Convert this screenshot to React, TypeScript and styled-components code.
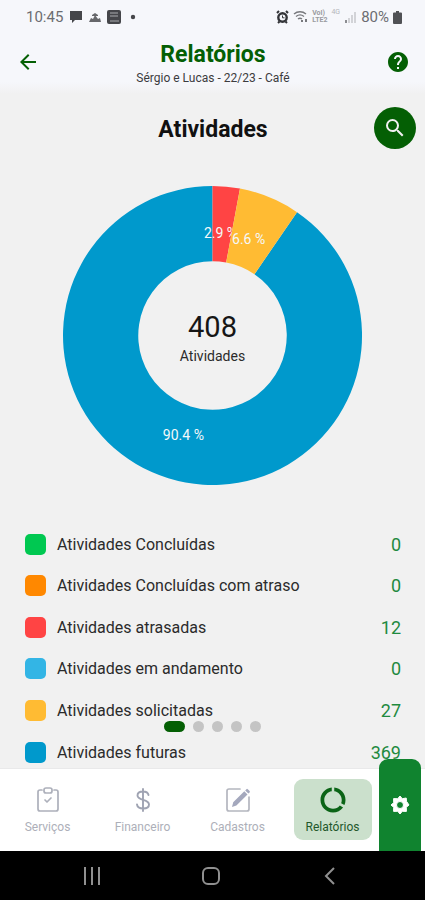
import React from "react";
import styled, { createGlobalStyle, css } from "styled-components";
import { MdArrowBack, MdDataUsage, MdHelp, MdSearch } from "react-icons/md";

const GlobalStyle = createGlobalStyle`
  *, *::before, *::after { box-sizing: border-box; }
  body {
    margin: 0;
    background: #f1f1f1;
    font-family: Roboto, "Liberation Sans", sans-serif;
  }
  button { font: inherit; border: 0; padding: 0; background: none; cursor: pointer; }
`;

const Screen = styled.div`
  display: flex;
  flex-direction: column;
  min-height: 100vh;
`;

const StatusBar = styled.div`
  display: flex;
  align-items: center;
  justify-content: space-between;
  height: 34px;
  padding: 0 23px 0 26px;
  background: #f6f7fb;
  color: #6c6d71;
  font-size: 15px;
`;

const StatusGroup = styled.div<{ $gap: number }>`
  display: flex;
  align-items: center;
  gap: ${(p) => p.$gap}px;
  svg { display: block; }
`;

const NetworkLabel = styled.span`
  display: flex;
  flex-direction: column;
  font-size: 7px;
  font-weight: 700;
  line-height: 7px;
  color: #9a9ba0;
`;

const Generation = styled.span`
  align-self: flex-start;
  font-size: 7px;
  line-height: 8px;
  color: #b5b6ba;
`;

const AppBar = styled.header`
  display: grid;
  grid-template-columns: 40px 1fr 40px;
  align-items: center;
  height: 60px;
  padding: 0 7px 4px 8px;
  background: linear-gradient(#f6f7fb 48px, #f1f1f1);
`;

const BarButton = styled.button`
  display: flex;
  align-items: center;
  justify-content: center;
  height: 40px;
  color: #045f04;
`;

const Titles = styled.div`
  padding-top: 6px;
  text-align: center;
`;

const PageTitle = styled.h1`
  margin: 0;
  font-size: 23px;
  line-height: 26px;
  font-weight: 700;
  color: #045f04;
`;

const Subtitle = styled.p`
  margin: 0;
  font-size: 12px;
  line-height: 20px;
  color: #3c3c3e;
`;

const Content = styled.main`
  position: relative;
  display: flex;
  flex-direction: column;
  flex: 1;
`;

const SectionHead = styled.div`
  display: grid;
  grid-template-columns: 42px 1fr 42px;
  align-items: center;
  padding: 13px 9px 0 10px;
`;

const SectionTitle = styled.h2`
  grid-column: 2;
  margin: 0;
  padding-top: 4px;
  text-align: center;
  font-size: 23px;
  line-height: 28px;
  font-weight: 700;
  color: #111;
`;

const SearchButton = styled.button`
  display: flex;
  align-items: center;
  justify-content: center;
  width: 42px;
  height: 42px;
  border-radius: 50%;
  background: #045f04;
  color: #f1f1f1;
`;

const ChartArea = styled.figure`
  display: flex;
  justify-content: center;
  margin: 0;
  padding: 36px 0 42px 1px;
  svg { display: block; width: 71%; max-width: 360px; height: auto; }
`;

const Legend = styled.ul`
  display: flex;
  flex-direction: column;
  flex: 1;
  justify-content: space-between;
  margin: 0;
  padding: 0 24px 0 25px;
  list-style: none;
`;

const LegendRow = styled.li`
  display: flex;
  align-items: center;
  gap: 11px;
  height: 32px;
`;

const Swatch = styled.span<{ $color: string }>`
  width: 21px;
  height: 21px;
  border-radius: 5px;
  background: ${(p) => p.$color};
`;

const LegendLabel = styled.span`
  flex: 1;
  font-size: 16px;
  color: #2b2b2b;
`;

const LegendValue = styled.span`
  font-size: 18px;
  color: #1f8a3f;
`;

const Pager = styled.div`
  position: absolute;
  left: 0;
  right: 0;
  bottom: 36px;
  display: flex;
  justify-content: center;
  gap: 8px;
`;

const PagerDot = styled.button<{ $active: boolean }>`
  width: ${(p) => (p.$active ? 21 : 11)}px;
  height: 11px;
  border-radius: 6px;
  background: ${(p) => (p.$active ? "#045f04" : "#c4c4c4")};
`;

const TabBar = styled.nav`
  position: relative;
  display: grid;
  grid-template-columns: repeat(4, 1fr);
  height: 83px;
  padding: 10px 45px 11px 0;
  background: #fff;
  border-top: 1px solid #e9e9ea;
`;

const Tab = styled.button<{ $active: boolean }>`
  display: flex;
  flex-direction: column;
  align-items: center;
  justify-content: center;
  gap: 4px;
  justify-self: center;
  width: 78px;
  border-radius: 9px;
  font-size: 12px;
  line-height: 16px;
  color: #adafb9;
  ${(p) =>
    p.$active &&
    css`
      background: #cbe0cc;
      color: #23582b;
    `}
  svg { display: block; height: 30px; }
`;

const SettingsTab = styled.button`
  position: absolute;
  right: 4px;
  bottom: 0;
  display: flex;
  align-items: center;
  justify-content: center;
  width: 42px;
  height: 92px;
  border-radius: 9px 9px 0 0;
  background: #10832f;
`;

const SystemBar = styled.footer`
  display: grid;
  grid-template-columns: repeat(3, 119px);
  justify-content: center;
  height: 49px;
  padding-right: 3px;
  background: #000;
`;

const SystemButton = styled.button`
  display: flex;
  align-items: center;
  justify-content: center;
`;

const SLICES = [
  { value: 369, start: 39, color: "#0099cc", label: "90.4 %", x: 121, y: 254 },
  { value: 12, start: 0, color: "#ff4444", label: "2.9 %", x: 158, y: 53 },
  { value: 27, start: 12, color: "#ffbb33", label: "6.6 %", x: 186, y: 59 },
];

const LEGEND = [
  { label: "Atividades Concluídas", value: 0, color: "#00c851" },
  { label: "Atividades Concluídas com atraso", value: 0, color: "#ff8800" },
  { label: "Atividades atrasadas", value: 12, color: "#ff4444" },
  { label: "Atividades em andamento", value: 0, color: "#33b5e5" },
  { label: "Atividades solicitadas", value: 27, color: "#ffbb33" },
  { label: "Atividades futuras", value: 369, color: "#0099cc" },
];

const TOTAL = 408;

function slicePath(start: number, value: number) {
  const point = (amount: number, radius: number) => {
    const angle = (amount / TOTAL) * Math.PI * 2;
    return `${150 + radius * Math.sin(angle)} ${150 - radius * Math.cos(angle)}`;
  };
  const end = start + value;
  const large = value > TOTAL / 2 ? 1 : 0;
  return `M${point(start, 149)} A149 149 0 ${large} 1 ${point(end, 149)} L${point(end, 74)} A74 74 0 ${large} 0 ${point(start, 74)}Z`;
}

function DonutChart() {
  return (
    <svg viewBox="0 0 300 300" role="img" aria-label="408 Atividades" fontFamily="Roboto, sans-serif" textAnchor="middle">
      {SLICES.map((s) => (
        <g key={s.label}>
          <path d={slicePath(s.start, s.value)} fill={s.color} />
          <text x={s.x} y={s.y} fontSize="14" fill="#f4f8fa">{s.label}</text>
        </g>
      ))}
      <text x="150" y="151" fontSize="29" fill="#161616">408</text>
      <text x="150" y="175" fontSize="14" fill="#2b2b2b">Atividades</text>
    </svg>
  );
}

function ClipboardIcon() {
  return (
    <svg width="26" height="28" viewBox="0 0 26 28" fill="none" stroke="#adb0bb" strokeWidth="1.7" strokeLinecap="round" strokeLinejoin="round">
      <path d="M7 4H5a2 2 0 0 0-2 2v17a2 2 0 0 0 2 2h16a2 2 0 0 0 2-2V6a2 2 0 0 0-2-2h-2" />
      <rect x="9" y="2" width="8" height="5" rx="2" />
      <path d="M10 14l2 2 4-4" />
    </svg>
  );
}

function DollarIcon() {
  return (
    <svg width="26" height="28" viewBox="0 0 26 28" fill="none" stroke="#9fa3b2" strokeWidth="1.9" strokeLinecap="round">
      <path d="M13 3v22M18.500 9c-.5-2.500-2.500-3.500-5.500-3.500-3.200 0-5.500 1.400-5.500 4 0 5.500 11.500 3.200 11.500 9 0 2.600-2.500 4-5.800 4-3.500 0-5.800-1.400-6.200-4" />
    </svg>
  );
}

function EditIcon() {
  return (
    <svg width="28" height="28" viewBox="0 0 28 28" fill="none">
      <path d="M16 3H5a2 2 0 0 0-2 2V23a2 2 0 0 0 2 2h18a2 2 0 0 0 2-2V11" stroke="#b4b6bf" strokeWidth="1.700" strokeLinecap="round" />
      <path d="M8 21l1.200-4.800L20.300 5.300l3.200 3.200L12.400 19.600zM21.200 4.400l1.200-1.200a1 1 0 0 1 1.400 0l1.800 1.800a1 1 0 0 1 0 1.400l-1.200 1.200z" fill="#a4a8bd" />
    </svg>
  );
}

function GearIcon() {
  return (
    <svg width="20" height="20" viewBox="0 0 20 20">
      <path
        fill="#fff"
        stroke="#fff"
        strokeLinejoin="round"
        fillRule="evenodd"
        d="M10 1l2.300 2.700 3.900-.7.300 3.300L19 10l-2.700 2.300.1 4.100-4.100-.1L10 19l-2.300-2.700-4.100.1.1-4.100L1 10l2.700-2.300-.1-4.100 4.100.1zM10 6.500a3.500 3.500 0 1 0 0 7 3.500 3.500 0 0 0 0-7z"
      />
    </svg>
  );
}

function NotificationIcons() {
  return (
    <svg width="67" height="16" viewBox="0 0 67 16" fill="#45464a">
      <path d="M1 2h12v9H6l-3 3v-3H1z" />
      <path d="M20 13l2-4 2 1 2-4 3 4 2-1 1 4zM23 6l3-2 3 2v1h-6z" fill="#66676b" />
      <rect x="38" y="1" width="14" height="14" rx="2" />
      <path d="M41 4h8M41 7h8M41 12h9" stroke="#aaabae" strokeWidth="1" />
      <circle cx="64" cy="8" r="2.200" />
    </svg>
  );
}

function AlarmIcon() {
  return (
    <svg width="13" height="14" viewBox="0 0 13 14" fill="none" stroke="#333438">
      <circle cx="6.500" cy="7.500" r="4.200" strokeWidth="2.400" />
      <path d="M1 3l2-2M12 3l-2-2M2 13l1.500-1.500M11 13l-1.500-1.500" strokeWidth="2" />
      <path d="M6.500 5.500v2.300H8.500" strokeWidth="1" />
    </svg>
  );
}

function WifiIcon() {
  return (
    <svg width="15" height="14" viewBox="0 0 15 14" fill="none" stroke="#77787c" strokeWidth="1.400">
      <path d="M1 4c3.500-3 8.500-3 12 0M3 6.500c2.500-2 5.500-2 8 0M5 9c1.300-1 2.700-1 4 0" />
      <path d="M8 11h2M13 9v3" strokeWidth="2" />
    </svg>
  );
}

function SignalIcon() {
  return (
    <svg width="13" height="14" viewBox="0 0 13 14">
      <path d="M1 10h2v3H1z" fill="#8c8d91" />
      <path d="M4 8h2v5H4zM7 5h2v8H7zM10 2h2v11h-2z" fill="#d2d3d7" />
    </svg>
  );
}

const TABS = [
  { label: "Serviços", icon: <ClipboardIcon /> },
  { label: "Financeiro", icon: <DollarIcon /> },
  { label: "Cadastros", icon: <EditIcon /> },
  { label: "Relatórios", icon: <MdDataUsage size={30} color="#0b6416" /> },
];

export default function App() {
  return (
    <Screen>
      <GlobalStyle />
      <StatusBar>
        <StatusGroup $gap={6}>
          <span>10:45</span>
          <NotificationIcons />
        </StatusGroup>
        <StatusGroup $gap={4}>
          <AlarmIcon />
          <WifiIcon />
          <NetworkLabel>
            <span>VoI)</span>
            <span>LTE2</span>
          </NetworkLabel>
          <Generation>4G</Generation>
          <SignalIcon />
          <span>80%</span>
          <svg width="9" height="13" viewBox="0 0 9 13" fill="#505155">
            <path d="M3 0h3v1.500h2a1 1 0 0 1 1 1V12a1 1 0 0 1-1 1H1a1 1 0 0 1-1-1V2.500a1 1 0 0 1 1-1h2z" />
          </svg>
        </StatusGroup>
      </StatusBar>
      <AppBar>
        <BarButton aria-label="Voltar"><MdArrowBack size={24} /></BarButton>
        <Titles>
          <PageTitle>Relatórios</PageTitle>
          <Subtitle>Sérgio e Lucas - 22/23 - Café</Subtitle>
        </Titles>
        <BarButton aria-label="Ajuda"><MdHelp size={24} /></BarButton>
      </AppBar>
      <Content>
        <SectionHead>
          <SectionTitle>Atividades</SectionTitle>
          <SearchButton aria-label="Pesquisar"><MdSearch size={24} /></SearchButton>
        </SectionHead>
        <ChartArea><DonutChart /></ChartArea>
        <Legend>
          {LEGEND.map((item) => (
            <LegendRow key={item.label}>
              <Swatch $color={item.color} />
              <LegendLabel>{item.label}</LegendLabel>
              <LegendValue>{item.value}</LegendValue>
            </LegendRow>
          ))}
        </Legend>
        <Pager>
          {[0, 1, 2, 3, 4].map((page) => (
            <PagerDot key={page} $active={page === 0} aria-label={`Página ${page + 1}`} />
          ))}
        </Pager>
      </Content>
      <TabBar>
        {TABS.map((tab) => (
          <Tab key={tab.label} $active={tab.label === "Relatórios"}>
            {tab.icon}
            {tab.label}
          </Tab>
        ))}
        <SettingsTab aria-label="Configurações"><GearIcon /></SettingsTab>
      </TabBar>
      <SystemBar>
        <SystemButton aria-label="Recentes">
          <svg width="18" height="18" viewBox="0 0 18 18" stroke="#909090" strokeWidth="2"><path d="M2 0v18M9 0v18M16 0v18" /></svg>
        </SystemButton>
        <SystemButton aria-label="Início">
          <svg width="18" height="18" viewBox="0 0 18 18" fill="none" stroke="#909090" strokeWidth="2"><rect x="1" y="1" width="16" height="16" rx="5" /></svg>
        </SystemButton>
        <SystemButton aria-label="Voltar">
          <svg width="18" height="18" viewBox="0 0 18 18" fill="none" stroke="#909090" strokeWidth="2"><path d="M13 1L5 9l8 8" /></svg>
        </SystemButton>
      </SystemBar>
    </Screen>
  );
}
